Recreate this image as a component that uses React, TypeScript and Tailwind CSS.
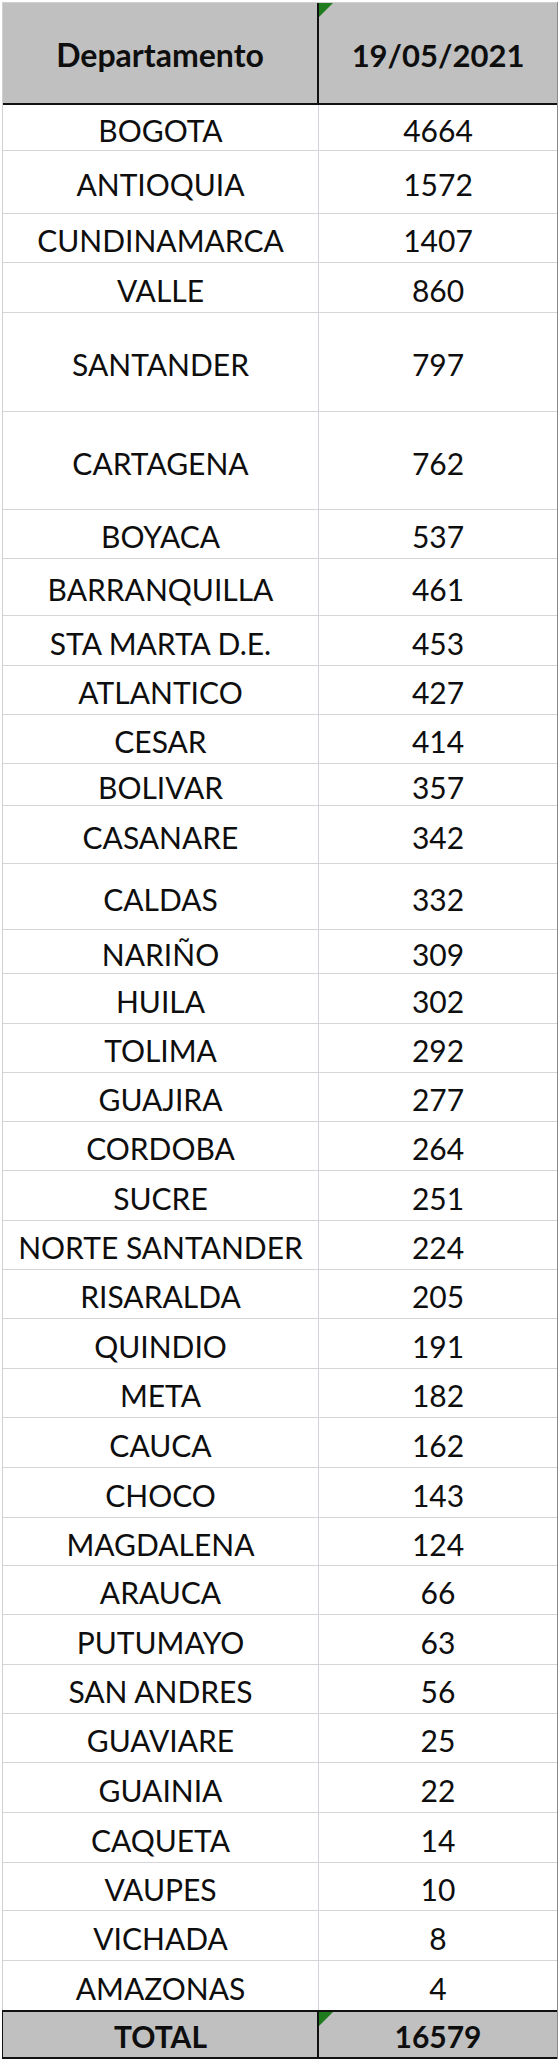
import React from "react";

type Row = { name: string; value: string; h: string };

const rows: Row[] = [
  { name: "BOGOTA", value: "4664", h: "h-[46px]" },
  { name: "ANTIOQUIA", value: "1572", h: "h-[63px]" },
  { name: "CUNDINAMARCA", value: "1407", h: "h-[49px]" },
  { name: "VALLE", value: "860", h: "h-[50px]" },
  { name: "SANTANDER", value: "797", h: "h-[99px]" },
  { name: "CARTAGENA", value: "762", h: "h-[98px]" },
  { name: "BOYACA", value: "537", h: "h-[49px]" },
  { name: "BARRANQUILLA", value: "461", h: "h-[57px]" },
  { name: "STA MARTA D.E.", value: "453", h: "h-[50px]" },
  { name: "ATLANTICO", value: "427", h: "h-[49px]" },
  { name: "CESAR", value: "414", h: "h-[49px]" },
  { name: "BOLIVAR", value: "357", h: "h-[42px]" },
  { name: "CASANARE", value: "342", h: "h-[58px]" },
  { name: "CALDAS", value: "332", h: "h-[66px]" },
  { name: "NARIÑO", value: "309", h: "h-[44px]" },
  { name: "HUILA", value: "302", h: "h-[50px]" },
  { name: "TOLIMA", value: "292", h: "h-[49px]" },
  { name: "GUAJIRA", value: "277", h: "h-[49px]" },
  { name: "CORDOBA", value: "264", h: "h-[49px]" },
  { name: "SUCRE", value: "251", h: "h-[50px]" },
  { name: "NORTE SANTANDER", value: "224", h: "h-[49px]" },
  { name: "RISARALDA", value: "205", h: "h-[49px]" },
  { name: "QUINDIO", value: "191", h: "h-[50px]" },
  { name: "META", value: "182", h: "h-[49px]" },
  { name: "CAUCA", value: "162", h: "h-[50px]" },
  { name: "CHOCO", value: "143", h: "h-[50px]" },
  { name: "MAGDALENA", value: "124", h: "h-[48px]" },
  { name: "ARAUCA", value: "66", h: "h-[49px]" },
  { name: "PUTUMAYO", value: "63", h: "h-[50px]" },
  { name: "SAN ANDRES", value: "56", h: "h-[49px]" },
  { name: "GUAVIARE", value: "25", h: "h-[49px]" },
  { name: "GUAINIA", value: "22", h: "h-[50px]" },
  { name: "CAQUETA", value: "14", h: "h-[50px]" },
  { name: "VAUPES", value: "10", h: "h-[48px]" },
  { name: "VICHADA", value: "8", h: "h-[50px]" },
  { name: "AMAZONAS", value: "4", h: "h-[49px]" },
];

function GreenMark() {
  return (
    <svg
      className="absolute left-0 top-0"
      width="14"
      height="14"
      viewBox="0 0 14 14"
    >
      <polygon points="0,0 14,0 0,14" fill="#1e7b1e" />
    </svg>
  );
}

export default function App() {
  return (
    <div
      className="w-[560px] h-[2060px] bg-white p-[2px] text-[#0e0e0e]"
      style={{ fontFamily: "Lato, 'Liberation Sans', sans-serif" }}
    >
      <div className="w-[556px] border-l border-r border-l-[#d0d0d0] border-r-[#8a8a8a]">
        {/* Header */}
        <div className="grid grid-cols-[316px_1fr] h-[103px] bg-[#c0c0c0] border-t border-t-[#cfcfcf] border-b-2 border-b-[#111]">
          <div className="flex items-center justify-center border-r-2 border-r-[#111] text-[32px] font-bold pt-[4px]">
            Departamento
          </div>
          <div className="relative flex items-center justify-center text-[31px] font-bold pt-[4px]">
            <GreenMark />
            19/05/2021
          </div>
        </div>
        {/* Body */}
        {rows.map((r, i) => (
          <div
            key={r.name}
            className={`grid grid-cols-[316px_1fr] ${r.h} ${
              i === rows.length - 1 ? "" : "border-b border-b-[#d6d6d6]"
            }`}
          >
            <div className="flex items-center justify-center border-r border-r-[#d2d2da] text-[30px] pt-[4px] leading-none">
              {r.name}
            </div>
            <div className="flex items-center justify-center text-[30px] pt-[4px] leading-none">
              {r.value}
            </div>
          </div>
        ))}
        {/* Total */}
        <div className="grid grid-cols-[316px_1fr] h-[49px] bg-[#c0c0c0] border-t-2 border-t-[#111] border-b-2 border-b-[#111] -ml-px border-l border-l-[#111]">
          <div className="flex items-center justify-center border-r-2 border-r-[#111] text-[30px] font-bold leading-none pt-[2px] ml-px">
            TOTAL
          </div>
          <div className="relative flex items-center justify-center text-[30px] font-bold leading-none pt-[2px]">
            <GreenMark />
            16579
          </div>
        </div>
      </div>
    </div>
  );
}
